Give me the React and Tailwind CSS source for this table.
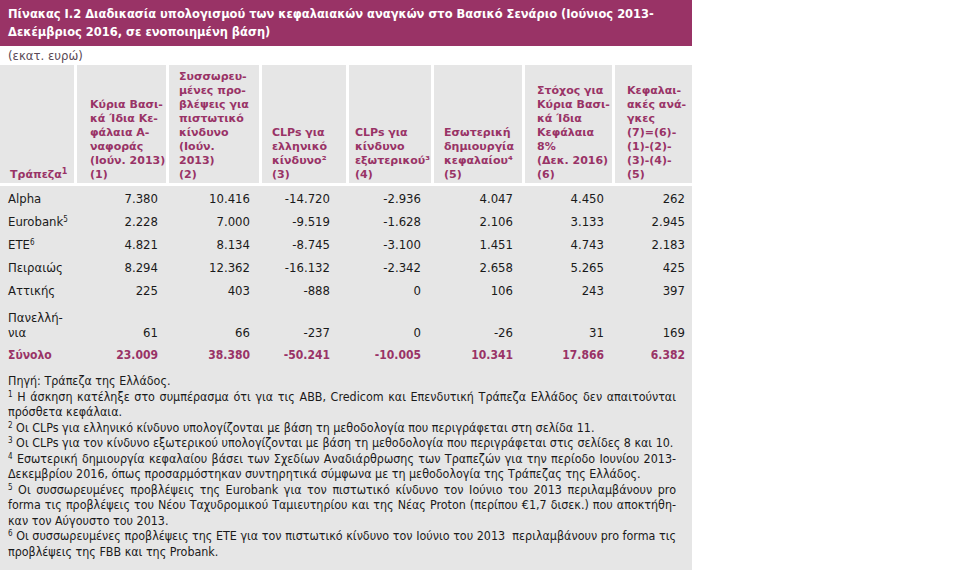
import React from 'react';

const COLS = 'grid grid-cols-[74px_89px_90px_84px_82px_88px_87px_77px] gap-x-[3px]';

const headers = [
    { lines: ['Τράπεζα'], sup: '1', pad: 'pl-[10px]' },
    { lines: ['Κύρια Βασι-', 'κά Ίδια Κε-', 'φάλαια Α-', 'ναφοράς', '(Ιούν. 2013)', '(1)'], pad: 'pl-[13px]' },
    { lines: ['Συσσωρευ-', 'μένες προ-', 'βλέψεις για', 'πιστωτικό', 'κίνδυνο', '(Ιούν.', '2013)', '(2)'], pad: 'pl-[10px]' },
    { lines: ['CLPs για', 'ελληνικό', 'κίνδυνο²', '(3)'], pad: 'pl-[10px]' },
    { lines: ['CLPs για', 'κίνδυνο', 'εξωτερικού³', '(4)'], pad: 'pl-[6px]' },
    { lines: ['Εσωτερική', 'δημιουργία', 'κεφαλαίου⁴', '(5)'], pad: 'pl-[10px]' },
    { lines: ['Στόχος για', 'Κύρια Βασι-', 'κά Ίδια', 'Κεφάλαια', '8%', '(Δεκ. 2016)', '(6)'], pad: 'pl-[12px]' },
    { lines: ['Κεφαλαι-', 'ακές ανά-', 'γκες', '(7)=(6)-', '(1)-(2)-', '(3)-(4)-', '(5)'], pad: 'pl-[12px]' },
];

const rows = [
    { bank: ['Alpha'], vals: ['7.380', '10.416', '-14.720', '-2.936', '4.047', '4.450', '262'] },
    { bank: ['Eurobank'], sup: '5', vals: ['2.228', '7.000', '-9.519', '-1.628', '2.106', '3.133', '2.945'] },
    { bank: ['ETE'], sup: '6', vals: ['4.821', '8.134', '-8.745', '-3.100', '1.451', '4.743', '2.183'] },
    { bank: ['Πειραιώς'], vals: ['8.294', '12.362', '-16.132', '-2.342', '2.658', '5.265', '425'] },
    { bank: ['Αττικής'], vals: ['225', '403', '-888', '0', '106', '243', '397'] },
    { bank: ['Πανελλή-', 'νια'], vals: ['61', '66', '-237', '0', '-26', '31', '169'] },
];

const totals = ['23.009', '38.380', '-50.241', '-10.005', '10.341', '17.866', '6.382'];
const valPad = ['pr-[8px]', 'pr-[9px]', 'pr-[16px]', 'pr-[10px]', 'pr-[9px]', 'pr-[8px]', 'pr-[7px]'];

// each footnote line written out; j = stretch to full width
const notes = [
    { t: 'Πηγή: Τράπεζα της Ελλάδος.' },
    { s: '1', t: ' Η άσκηση κατέληξε στο συμπέρασμα ότι για τις ABB, Credicom και Επενδυτική Τράπεζα Ελλάδος δεν απαιτούνται', j: true },
    { t: 'πρόσθετα κεφάλαια.' },
    { s: '2', t: ' Οι CLPs για ελληνικό κίνδυνο υπολογίζονται με βάση τη μεθοδολογία που περιγράφεται στη σελίδα 11.' },
    { s: '3', t: ' Οι CLPs για τον κίνδυνο εξωτερικού υπολογίζονται με βάση τη μεθοδολογία που περιγράφεται στις σελίδες 8 και 10.' },
    { s: '4', t: ' Εσωτερική δημιουργία κεφαλαίου βάσει των Σχεδίων Αναδιάρθρωσης των Τραπεζών για την περίοδο Ιουνίου 2013-', j: true },
    { t: 'Δεκεμβρίου 2016, όπως προσαρμόστηκαν συντηρητικά σύμφωνα με τη μεθοδολογία της Τράπεζας της Ελλάδος.' },
    { s: '5', t: ' Οι συσσωρευμένες προβλέψεις της Eurobank για τον πιστωτικό κίνδυνο τον Ιούνιο του 2013 περιλαμβάνουν pro', j: true },
    { t: 'forma τις προβλέψεις του Νέου Ταχυδρομικού Ταμιευτηρίου και της Νέας Proton (περίπου €1,7 δισεκ.) που αποκτήθη-', j: true },
    { t: 'καν τον Αύγουστο του 2013.' },
    { s: '6', t: ' Οι συσσωρευμένες προβλέψεις της ETE για τον πιστωτικό κίνδυνο τον Ιούνιο του 2013  περιλαμβάνουν pro forma τις', j: true },
    { t: 'προβλέψεις της FBB και της Probank.' },
];

export default function App() {
    return (
        <div className="w-[955px] h-[583px] bg-white font-['DejaVu_Sans_Condensed','Liberation_Sans',sans-serif]">
            <div className="w-[692px]">
                {/* Title band */}
                <div className="h-[46px] bg-[#993366] pl-[8px] pt-[5px] text-white font-bold text-[12.75px] leading-[18px]">
                    <div>Πίνακας Ι.2 Διαδικασία υπολογισμού των κεφαλαιακών αναγκών στο Βασικό Σενάριο (Ιούνιος 2013-</div>
                    <div>Δεκέμβριος 2016, σε ενοποιημένη βάση)</div>
                </div>
                <div className="h-[19px] pl-[8px] text-[13px] leading-[19px] text-[#5a4a56]">(εκατ. ευρώ)</div>

                {/* Column headers */}
                <div className={`${COLS} h-[118px]`}>
                    {headers.map((h, i) => (
                        <div key={i} className={`bg-[#e6e6e6] flex flex-col justify-end ${h.pad} text-[#993366] font-bold text-[11px] leading-[14px] font-['DejaVu_Sans','Liberation_Sans',sans-serif] pb-[1px]`}>
                            {h.lines.map((l, k) => (
                                <div key={k} className="whitespace-nowrap">
                                    {l}
                                    {h.sup && k === h.lines.length - 1 && <sup className="text-[8px]">{h.sup}</sup>}
                                </div>
                            ))}
                        </div>
                    ))}
                </div>

                {/* Body */}
                <div className="mt-[3px] bg-[#e6e6e6] pt-[1px] pb-[11px] text-[13px] text-[#1a1a1a]">
                    {rows.map((r, i) => (
                        <div key={i} className={`${COLS} items-end leading-[15px] ${r.bank.length > 1 ? 'pt-[8px] pb-[4px]' : 'py-[4px]'}`}>
                            <div className="pl-[8px]">
                                {r.bank.map((b, k) => (
                                    <div key={k}>
                                        {b}
                                        {r.sup && <sup className="text-[8px]">{r.sup}</sup>}
                                    </div>
                                ))}
                            </div>
                            {r.vals.map((v, k) => (
                                <div key={k} className={`text-right ${valPad[k]}`}>{v}</div>
                            ))}
                        </div>
                    ))}
                    <div className={`${COLS} leading-[15px] py-[4px] font-bold text-[#993366] text-[12px] font-['DejaVu_Sans_Condensed','DejaVu_Sans',sans-serif]`}>
                        <div className="pl-[8px]">Σύνολο</div>
                        {totals.map((v, k) => (
                            <div key={k} className={`text-right ${valPad[k]}`}>{v}</div>
                        ))}
                    </div>

                    {/* Footnotes */}
                    <div className="pt-[6px] pl-[8px] pr-[16px] text-[12.4px] leading-[15.5px]">
                        {notes.map((n, i) => (
                            <div key={i} className={`whitespace-pre ${n.j ? 'text-justify [text-align-last:justify] whitespace-normal' : ''}`}>
                                {n.s && <sup className="text-[8px]">{n.s}</sup>}
                                {n.t}
                            </div>
                        ))}
                    </div>
                </div>
            </div>
        </div>
    );
}
